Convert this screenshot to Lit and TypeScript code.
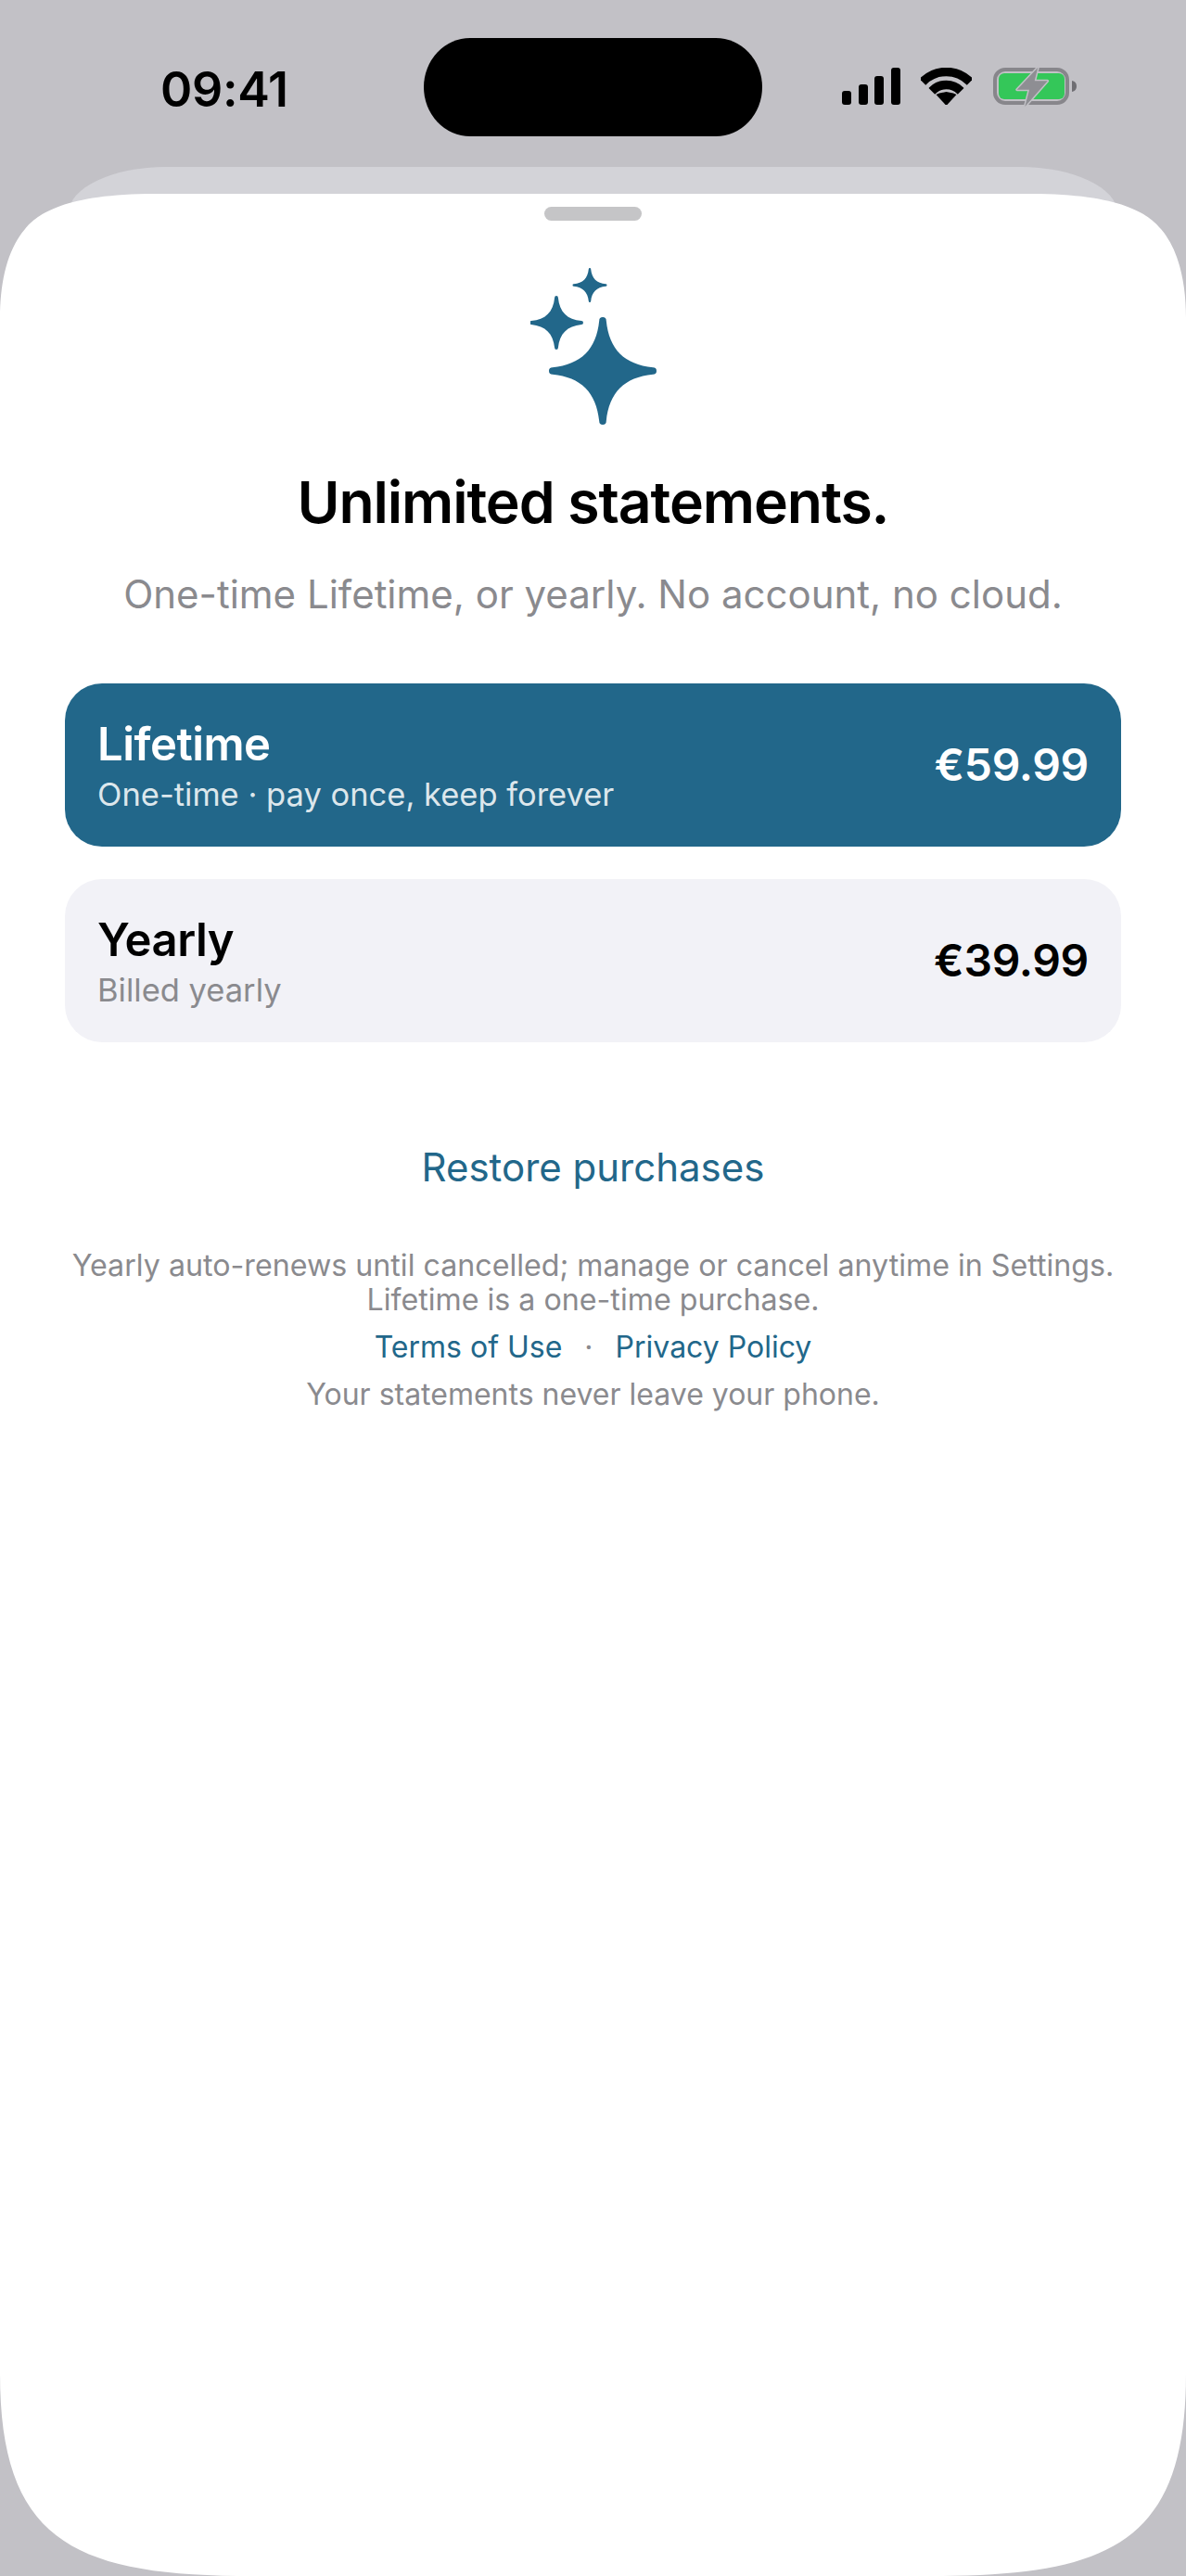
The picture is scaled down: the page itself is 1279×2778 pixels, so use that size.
import { LitElement, html, css, svg } from "lit";
import { customElement } from "lit/decorators.js";

const STAR = "M.065 -.935A.065 .065 0 0 0 -.065 -.935C-.12 -.4 -.4 -.12 -.935 -.065A.065 .065 0 0 0 -.935 .065C-.4 .12 -.12 .4 -.065 .935A.065 .065 0 0 0 .065 .935C.12 .4 .4 .12 .935 .065A.065 .065 0 0 0 .935 -.065C.4 -.12 .12 -.4 .065 -.935Z";
const star = (x: number, y: number, r: number) =>
  svg`<path d=${STAR} transform="translate(${x} ${y}) scale(${r})"></path>`;

@customElement("app-root")
export class AppRoot extends LitElement {
  static styles = css`
    :host { display: block; width: 1279px; height: 2778px; background: #c2c1c6; overflow: hidden;
      font-family: Inter, "Liberation Sans", sans-serif; color: #000; }
    .status { height: 180px; display: flex; align-items: flex-start; }
    .time { margin: 67px 0 0 173px; width: 284px; font-size: 52px; line-height: 60px; font-weight: 600; letter-spacing: -.3px; }
    .island { margin-top: 41px; width: 365px; height: 106px; border-radius: 50px / 53px; background: #000; flex: none; }
    .signal { margin: 73px 0 0 86px; width: 63px; height: 40px; flex: none; }
    .wifi { margin: 73px 0 0 22px; width: 55px; height: 40px; flex: none; }
    .battery { margin: 69px 0 0 23px; width: 92px; height: 48px; flex: none; }
    .back { height: 60px; margin: 0 74px -31px; background: #d3d3d8; border-radius: 105px 105px 0 0 / 50px 50px 0 0; }
    .sheet { position: relative; height: 2569px; background: #fff; display: flex; flex-direction: column; align-items: center; padding: 0 70px; box-sizing: border-box;
      clip-path: path("M0 134C0 95 8 60 27 38C40 22 70 0 167 0L1112 0C1209 0 1239 22 1252 38C1271 60 1279 95 1279 134L1279 2351C1279 2531 1199 2569 1009 2569L270 2569C80 2569 0 2531 0 2351Z"); }
    .handle { margin-top: 14px; width: 105px; height: 15px; border-radius: 8px; background: #c5c5c7; flex: none; }
    .stars { margin-top: 51px; width: 136px; height: 169px; fill: #22678a; flex: none; }
    h1 { margin: 47px 0 0; font-size: 62.5px; line-height: 72px; font-weight: 600; letter-spacing: -1.1px; white-space: nowrap; }
    .sub { margin: 37px 0 0; font-size: 42px; line-height: 54px; color: #8a8a8e; white-space: nowrap; }
    .plans { margin-top: 69px; align-self: stretch; display: flex; flex-direction: column; gap: 35px; }
    .plan { height: 176px; border-radius: 40px; box-sizing: border-box; padding: 0 35px; display: flex; align-items: center; justify-content: space-between; background: #f2f2f7; }
    .plan.on { background: #22678a; color: #fff; }
    .info { padding-top: 3px; }
    .name { font-size: 49px; line-height: 56px; font-weight: 600; letter-spacing: -.5px; }
    .desc { font-size: 34.5px; line-height: 44px; color: #8a8a8e; margin-top: 4px; }
    .on .desc { color: rgba(255,255,255,.86); }
    .price { font-size: 48px; line-height: 60px; font-weight: 600; letter-spacing: -.3px; }
    .restore { margin-top: 108px; font-size: 42px; line-height: 54px; color: #22678a; }
    .legal { margin-top: 60px; font-size: 32.2px; line-height: 37px; color: #8a8a8e; text-align: center; white-space: nowrap; }
    .links { margin-top: 13px; display: flex; gap: 24px; font-size: 32px; line-height: 40px; color: #8a8a8e; }
    .links span.l { color: #22678a; }
    .never { margin-top: 11px; font-size: 32px; line-height: 40px; color: #8a8a8e; white-space: nowrap; }
  `;

  plan(name: string, desc: string, price: string, on = false) {
    return html`<div class="plan ${on ? "on" : ""}">
      <div class="info"><div class="name">${name}</div><div class="desc">${desc}</div></div>
      <div class="price">${price}</div>
    </div>`;
  }

  render() {
    return html`
      <div class="status">
        <div class="time">09:41</div>
        <div class="island"></div>
        <svg class="signal" viewBox="0 0 63 40"><rect x="0" y="25" width="10" height="15" rx="3"/><rect x="18" y="18" width="10" height="22" rx="3"/><rect x="35" y="9" width="10" height="31" rx="3"/><rect x="53" y="0" width="10" height="40" rx="3"/></svg>
        <svg class="wifi" viewBox="0 0 55 40">
          <defs><clipPath id="w"><polygon points="27.5,41 -3,10.500 -3,-2 58,-2 58,10.500"/></clipPath></defs>
          <g clip-path="url(#w)" fill="none" stroke="#000" stroke-width="9.500">
            <circle cx="27.500" cy="40" r="35.500"/><circle cx="27.500" cy="40" r="21.500"/>
          </g>
          <polygon points="27.5,41 16.500,29 20,27.500 27.5,26 35,27.500 38.500,29" />
        </svg>
        <svg class="battery" viewBox="0 0 92 48">
          <rect x="2" y="6" width="78" height="36" rx="11" fill="none" stroke="#87868b" stroke-width="4"/>
          <rect x="6" y="10" width="71" height="28" rx="6" fill="#34c759"/>
          <path d="M85 18a6 6 0 0 1 5 6a6 6 0 0 1 -5 6Z" fill="#6f6e73"/>
          <path d="M48.300 3.700L25.700 27.700H39L34.300 46L58.700 18.300H44.700Z" fill="#8e8e93" stroke="#c2c1c6" stroke-width="3" stroke-linejoin="round" paint-order="stroke"/>
        </svg>
      </div>
      <div class="back"></div>
      <div class="sheet">
        <div class="handle"></div>
        <svg class="stars" viewBox="0 0 136 169">${star(78, 111, 58)}${star(28, 59, 29)}${star(64, 18.5, 18.5)}</svg>
        <h1>Unlimited statements.</h1>
        <p class="sub">One-time Lifetime, or yearly. No account, no cloud.</p>
        <div class="plans">
          ${this.plan("Lifetime", "One-time · pay once, keep forever", "€59.99", true)}
          ${this.plan("Yearly", "Billed yearly", "€39.99")}
        </div>
        <div class="restore">Restore purchases</div>
        <div class="legal">Yearly auto-renews until cancelled; manage or cancel anytime in Settings.<br>Lifetime is a one-time purchase.</div>
        <div class="links"><span class="l">Terms of Use</span><span>·</span><span class="l">Privacy Policy</span></div>
        <div class="never">Your statements never leave your phone.</div>
      </div>`;
  }
}
